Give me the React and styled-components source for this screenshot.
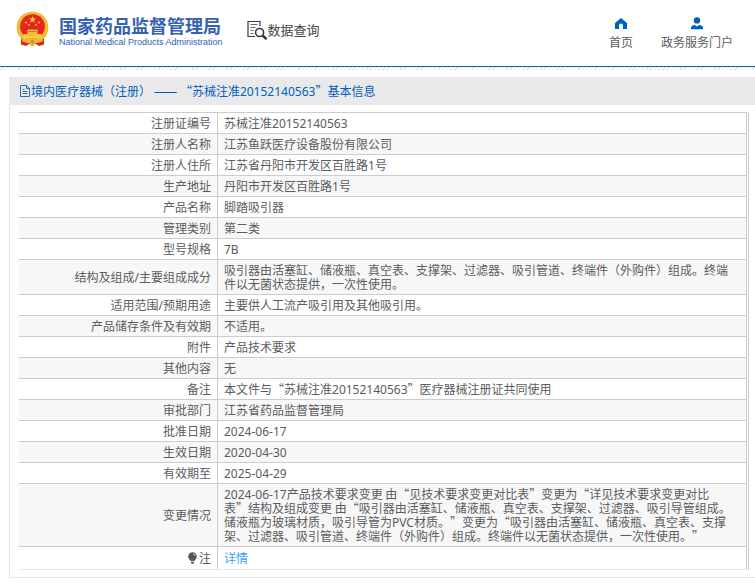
import React from "react";
import styled, { createGlobalStyle } from "styled-components";

const GlobalStyle = createGlobalStyle`
  * { box-sizing: border-box; }
  body {
    margin: 0;
    background: #fff;
    color: #5a5c60;
    font: 12px/14px "Noto Sans CJK SC", "Noto Sans", sans-serif;
    text-spacing-trim: space-all;
  }
`;

const Header = styled.header`
  display: flex;
  justify-content: space-between;
  height: 67px;
  padding: 0 22px 0 16px;
  border-bottom: 1px solid #0060bf;
`;

const HeaderGroup = styled.div`
  display: flex;
  align-items: flex-start;
`;

const Brand = styled.a`
  display: flex;
  gap: 10px;
  padding-top: 11px;
  color: #3561b0;
  text-decoration: none;
  white-space: nowrap;
`;

const BrandText = styled.span`
  display: flex;
  flex-direction: column;
  padding-top: 3px;
`;

const BrandName = styled.strong`
  font-size: 18px;
  line-height: 22px;
  font-weight: 700;
`;

const BrandEnglish = styled.span`
  font: 400 9px/13px "Liberation Sans", sans-serif;
`;

const QueryLink = styled.a`
  display: flex;
  align-items: center;
  margin: 20px 0 0 24px;
  color: #444;
  font-size: 13px;
  line-height: 20px;
  font-weight: 400;
  text-decoration: none;
  white-space: nowrap;
`;

const Nav = styled.nav`
  display: flex;
  gap: 28px;
  padding-top: 17px;
`;

const NavLink = styled.a`
  display: flex;
  flex-direction: column;
  align-items: center;
  gap: 4px;
  color: #5a5c60;
  line-height: 16px;
  text-decoration: none;
  white-space: nowrap;
`;

const Hatch = styled.div`
  height: 3px;
  background: repeating-linear-gradient(135deg, #fff 0 2px, #e2e2e2 2px 3px);
`;

const Panel = styled.main`
  margin: 7px 0 0 9px;
  border: solid #e8e8ee;
  border-width: 0 0 1px 1px;
  padding-bottom: 7px;
`;

const Title = styled.h1`
  display: flex;
  align-items: center;
  gap: 1px;
  height: 28px;
  margin: 0 0 7px;
  padding-left: 10px;
  background: #e9e9e9;
  color: #0060bf;
  font-size: 12px;
  font-weight: 400;
`;

const TitleText = styled.span`
  white-space: pre;
`;

const Dash = styled.span`
  font-size: 14px;
  line-height: 12px;
`;

const Frame = styled.div`
  margin: 0 6px 0 9px;
  padding-right: 1px;
  border-right: 1px solid #ccc;
`;

const Table = styled.table`
  width: 100%;
  border-collapse: separate;
  border-spacing: 0;
  border-right: 1px solid #ccc;
  border-bottom: 1px solid #e8e8ee;
  tr:nth-child(even) { background: #f7f7f7; }
`;

const Label = styled.th`
  width: 199px;
  padding: ${(p) => (p.$last ? 4 : 3)}px 6px;
  border-top: 1px solid #ccc;
  border-right: 1px solid #ccc;
  font-weight: 400;
  text-align: right;
  vertical-align: middle;
`;

const Value = styled.td`
  padding: ${(p) => (p.$last ? 4 : 3)}px 12px ${(p) => (p.$last ? 4 : 3)}px 6px;
  border-top: 1px solid #ccc;
  vertical-align: middle;
`;

const Latin = styled.span`
  font-family: "Noto Sans", sans-serif;
  line-height: 12px;
`;

const DetailLink = styled.a`
  color: #409eff;
  text-decoration: none;
`;

const BulbIcon = styled.svg`
  margin-right: 2px;
  vertical-align: -1px;
`;

const Mixed = ({ text }) =>
  text.split(/([A-Za-z0-9/-]+)/).map((part, i) =>
    i % 2 ? <Latin key={i}>{part}</Latin> : part
  );

const Emblem = () => (
  <svg width="33" height="36" viewBox="0 0 33 36" aria-hidden="true">
    <path d="M5 25 5 33.500l5 1.500 3-2h7l3 2 5-1.500V25z" fill="#d9271c" />
    <circle cx="16.5" cy="16.5" r="15.800" fill="#efb22c" />
    <circle cx="16.5" cy="16.5" r="14.200" fill="none" stroke="#f7cf48" strokeDasharray="2 1" />
    <circle cx="16.5" cy="15.500" r="12.300" fill="#e32620" />
    <path d="m16.500 5 1 2.400 2.600.1-2 1.600.7 2.500-2.300-1.400-2.200 1.400.7-2.500-2-1.600 2.500-.1z" fill="#fad342" />
    <g fill="#f4b936">
      <circle cx="10" cy="11.500" r="1.100" />
      <circle cx="23" cy="11.500" r="1.100" />
      <circle cx="13" cy="13.800" r="1" />
      <circle cx="20" cy="13.800" r="1" />
      <path d="M12 18.500h9l1.500 2h-12zM11.500 21h10v2h3.500l2 3.500H6L8 23h3.500z" />
    </g>
    <path d="M6 24.500h21l-2.500 3h-16z" fill="#f7ce45" />
    <path d="M6 28c3 1.500 5 2 7.500 2a3 3 0 0 1 6 0c2.500 0 4.500-.5 7.500-2v2c-3 1.500-5 2-7.500 2a3 3 0 0 1-6 0c-2.500 0-4.500-.5-7.500-2z" fill="#f4b936" />
    <circle cx="16.500" cy="30.800" r="2" fill="#e38928" />
  </svg>
);

const QueryIcon = () => (
  <svg width="21" height="20" viewBox="0 0 21 20" fill="none" stroke="#37374a" aria-hidden="true">
    <path d="M8 16.500H1V1.500h12V6" strokeWidth="1.200" />
    <path d="M3.500 4.500h7M3.500 7.500h5M3.500 10.500h3M3.500 13.500h3" stroke="#666674" />
    <circle cx="12.600" cy="12.500" r="4" strokeWidth="1.600" />
    <path d="m15.600 15.500 4 3.700" strokeWidth="2.400" />
  </svg>
);

const HomeIcon = () => (
  <svg width="14" height="13" viewBox="0 0 14 13" aria-hidden="true">
    <path d="M7 1 1 6v6h4V8.500a2 2 0 0 1 4 0V12h4V6z" fill="#0060bf" />
  </svg>
);

const UserIcon = () => (
  <svg width="14" height="13" viewBox="0 0 14 13" aria-hidden="true">
    <circle cx="7" cy="3.400" r="3.200" fill="#0060bf" />
    <path d="M1 12.300V11c0-1.900 1.800-3 4-3l2 1.500L9 8c2.200 0 4 1.100 4 3v1.300z" fill="#0060bf" />
  </svg>
);

const DocumentIcon = () => (
  <svg width="10" height="12" viewBox="0 0 10 12" fill="none" stroke="#2870c0" aria-hidden="true">
    <path d="M.5.5h6l3 3v8h-9zM6.500.5v3h3M2.500 4.500h2M2.500 6.500h5M2.500 8.500h5" />
  </svg>
);

const Bulb = () => (
  <BulbIcon width="9" height="12" viewBox="0 0 9 12" aria-hidden="true">
    <path d="M4.500.3A4.200 4.200 0 0 0 2 7.900L3 9.300h3L7 7.900A4.200 4.200 0 0 0 4.500.3zM3 10h3v1L5.300 11.700H3.700L3 11z" fill="#555" />
    <path d="M5 1.800q2 .3 2.200 2.200" fill="none" stroke="#fff" strokeWidth=".8" />
  </BulbIcon>
);

const rows = [
  ["注册证编号", "苏械注准20152140563"],
  ["注册人名称", "江苏鱼跃医疗设备股份有限公司"],
  ["注册人住所", "江苏省丹阳市开发区百胜路1号"],
  ["生产地址", "丹阳市开发区百胜路1号"],
  ["产品名称", "脚踏吸引器"],
  ["管理类别", "第二类"],
  ["型号规格", "7B"],
  ["结构及组成/主要组成成分", "吸引器由活塞缸、储液瓶、真空表、支撑架、过滤器、吸引管道、终端件（外购件）组成。终端件以无菌状态提供，一次性使用。"],
  ["适用范围/预期用途", "主要供人工流产吸引用及其他吸引用。"],
  ["产品储存条件及有效期", "不适用。"],
  ["附件", "产品技术要求"],
  ["其他内容", "无"],
  ["备注", "本文件与“苏械注准20152140563”医疗器械注册证共同使用"],
  ["审批部门", "江苏省药品监督管理局"],
  ["批准日期", "2024-06-17"],
  ["生效日期", "2020-04-30"],
  ["有效期至", "2025-04-29"],
  ["变更情况", "2024-06-17产品技术要求变更 由“见技术要求变更对比表”变更为“详见技术要求变更对比表”结构及组成变更 由“吸引器由活塞缸、储液瓶、真空表、支撑架、过滤器、吸引导管组成。储液瓶为玻璃材质，吸引导管为PVC材质。”变更为“吸引器由活塞缸、储液瓶、真空表、支撑架、过滤器、吸引管道、终端件（外购件）组成。终端件以无菌状态提供，一次性使用。”"],
];

export default function App() {
  return (
    <>
      <GlobalStyle />
      <Header>
        <HeaderGroup>
          <Brand href="#">
            <Emblem />
            <BrandText>
              <BrandName>国家药品监督管理局</BrandName>
              <BrandEnglish>National Medical Products Administration</BrandEnglish>
            </BrandText>
          </Brand>
          <QueryLink href="#query"><QueryIcon />数据查询</QueryLink>
        </HeaderGroup>
        <Nav>
          <NavLink href="#home"><HomeIcon />首页</NavLink>
          <NavLink href="#portal"><UserIcon />政务服务门户</NavLink>
        </Nav>
      </Header>
      <Hatch />
      <Panel>
        <Title>
          <DocumentIcon />
          <TitleText>
            境内医疗器械（注册） <Dash>——</Dash> <Mixed text="“苏械注准20152140563”基本信息" />
          </TitleText>
        </Title>
        <Frame>
          <Table>
            <tbody>
              {rows.map(([label, value]) => (
                <tr key={label}>
                  <Label scope="row"><Mixed text={label} /></Label>
                  <Value><Mixed text={value} /></Value>
                </tr>
              ))}
              <tr>
                <Label scope="row" $last><Bulb />注</Label>
                <Value $last><DetailLink href="#detail">详情</DetailLink></Value>
              </tr>
            </tbody>
          </Table>
        </Frame>
      </Panel>
    </>
  );
}
